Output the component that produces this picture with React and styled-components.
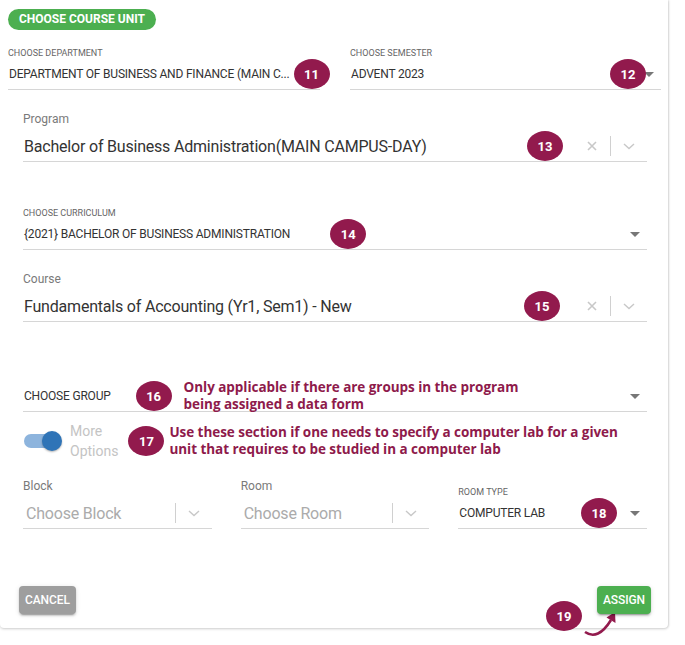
import React from 'react';
import styled, { createGlobalStyle } from 'styled-components';

const GlobalStyle = createGlobalStyle`
  body {
    margin: 0;
    background: #fff;
    font-family: Roboto, 'Liberation Sans', sans-serif;
  }
`;

const Page = styled.div`
  padding-bottom: 18px;
`;

const Card = styled.div`
  width: 668px;
  box-sizing: border-box;
  background: #fff;
  border-radius: 0 0 4px 4px;
  box-shadow: 0 1px 3px rgba(0, 0, 0, 0.18), 1px 0 2px rgba(0, 0, 0, 0.1);
`;

const Header = styled.div`
  padding: 8px 7px 0 8px;
`;

const Pill = styled.div`
  display: inline-block;
  height: 21px;
  line-height: 21px;
  padding: 0 11px;
  border-radius: 11px;
  background: #4caf50;
  color: #fff;
  font-size: 12px;
  font-weight: 700;
`;

const TopGrid = styled.div`
  display: grid;
  grid-template-columns: 312px 311px;
  column-gap: 30px;
  margin-top: 17px;
`;

const SmallLabel = styled.div`
  font-size: 9px;
  line-height: 12px;
  color: #666;
  text-transform: uppercase;
`;

const Row = styled.div`
  display: flex;
  align-items: center;
  height: 30px;
  border-bottom: 1px solid #d6d6d6;
  color: ${(p) => (p.$muted ? '#ababab' : '#333')};
  font-size: ${(p) => (p.$big ? '16px' : '12px')};
  letter-spacing: -0.2px;
  white-space: nowrap;
`;

const Value = styled.span`
  padding-left: ${(p) => p.$pad || 1}px;
`;

const Spacer = styled.div`
  flex: 1;
`;

const Badge = styled.span`
  display: inline-flex;
  align-items: center;
  justify-content: center;
  flex-shrink: 0;
  width: 36px;
  height: 30px;
  margin-left: ${(p) => p.$ml || 0}px;
  margin-right: ${(p) => p.$mr || 0}px;
  border-radius: 50%;
  background: #921a4d;
  color: #fff;
  font-size: 13px;
  font-weight: 700;
  letter-spacing: 0;
  position: relative;
  z-index: 1;
`;

const Form = styled.div`
  padding: 0 21px 0 23px;
`;

const Field = styled.div`
  margin-top: ${(p) => p.$mt || 0}px;
`;

const BigLabel = styled.div`
  font-size: 12px;
  line-height: 14px;
  color: #7a7a7a;
  margin-bottom: 5px;
`;

const Note = styled.div`
  margin-left: ${(p) => p.$ml || 0}px;
  font-family: 'Open Sans', Roboto, sans-serif;
  font-size: 13.5px;
  line-height: 17px;
  font-weight: 700;
  letter-spacing: -0.05px;
  color: #8e1a4b;
  white-space: nowrap;
`;

const IndicatorBox = styled.span`
  display: flex;
  align-items: center;
  justify-content: center;
  width: 36px;
  height: 30px;
  flex-shrink: 0;
`;

const Separator = styled.span`
  width: 1px;
  height: 20px;
  background: #d0d0d0;
  flex-shrink: 0;
`;

const ArrowBox = styled.span`
  display: flex;
  align-items: center;
  justify-content: center;
  width: 24px;
  height: 24px;
  flex-shrink: 0;
  margin-left: ${(p) => p.$ml || 0}px;
`;

const ToggleRow = styled.div`
  display: flex;
  align-items: center;
  height: 40px;
  margin-top: 9px;
`;

const Switch = styled.span`
  position: relative;
  width: 38px;
  height: 20px;
  margin-left: 1px;
  flex-shrink: 0;
`;

const Track = styled.span`
  position: absolute;
  left: 0;
  top: 3px;
  width: 33px;
  height: 14px;
  border-radius: 7px;
  background: #8db4dd;
`;

const Thumb = styled.span`
  position: absolute;
  right: 0;
  top: 0;
  width: 20px;
  height: 20px;
  border-radius: 50%;
  background: #2f74b7;
  box-shadow: 0 1px 2px rgba(0, 0, 0, 0.3);
`;

const MoreText = styled.div`
  margin-left: 8px;
  font-size: 14px;
  line-height: 20px;
  color: #c4c4c4;
`;

const TripleGrid = styled.div`
  display: grid;
  grid-template-columns: 1fr 1fr 1fr;
  column-gap: 29px;
  align-items: end;
  margin-top: 18px;
`;

const Footer = styled.div`
  display: flex;
  justify-content: space-between;
  align-items: center;
  margin-top: 57px;
  padding: 0 17px 14px 19px;
`;

const Button = styled.button`
  position: relative;
  z-index: 2;
  height: 28px;
  padding: 0 6px;
  border: none;
  border-radius: 4px;
  background: ${(p) => (p.$primary ? '#4caf50' : '#9e9e9e')};
  color: #fff;
  font-family: Roboto, 'Liberation Sans', sans-serif;
  font-size: 12px;
  font-weight: 500;
  letter-spacing: -0.1px;
  box-shadow: 0 3px 1px -2px rgba(0, 0, 0, 0.2), 0 2px 2px 0 rgba(0, 0, 0, 0.14),
    0 1px 5px 0 rgba(0, 0, 0, 0.12);
`;

const AssignWrap = styled.div`
  position: relative;
`;

const Pointer = styled.div`
  position: absolute;
  left: -51px;
  top: 15px;
`;

const CurlArrow = styled.svg`
  position: absolute;
  left: 36px;
  top: 10px;
`;

const DropArrow = () => (
  <svg width="24" height="24" viewBox="0 0 24 24">
    <path d="M7 10l5 5 5-5z" fill="#777" />
  </svg>
);

const Cross = () => (
  <svg width="12" height="12" viewBox="0 0 12 12">
    <path d="M2 2L10 10M10 2L2 10" stroke="#c8c8c8" strokeWidth="1.6" />
  </svg>
);

const Chevron = () => (
  <svg width="14" height="10" viewBox="0 0 14 10">
    <path d="M2 3L7 7.5L12 3" stroke="#c8c8c8" strokeWidth="1.4" fill="none" />
  </svg>
);

const SelectIndicators = ({ clearable }) => (
  <>
    {clearable && (
      <IndicatorBox>
        <Cross />
      </IndicatorBox>
    )}
    <Separator />
    <IndicatorBox>
      <Chevron />
    </IndicatorBox>
  </>
);

const App = () => (
  <Page>
    <GlobalStyle />
    <Card>
      <Header>
        <Pill>CHOOSE COURSE UNIT</Pill>
        <TopGrid>
          <div>
            <SmallLabel>Choose Department</SmallLabel>
            <Row>
              <Value>DEPARTMENT OF BUSINESS AND FINANCE (MAIN C...</Value>
              <Badge $ml={4}>11</Badge>
            </Row>
          </div>
          <div>
            <SmallLabel>Choose Semester</SmallLabel>
            <Row>
              <Value>ADVENT 2023</Value>
              <Spacer />
              <Badge>12</Badge>
              <ArrowBox $ml={-9}>
                <DropArrow />
              </ArrowBox>
            </Row>
          </div>
        </TopGrid>
      </Header>

      <Form>
        <Field $mt={22}>
          <BigLabel>Program</BigLabel>
          <Row $big>
            <Value>Bachelor of Business Administration(MAIN CAMPUS-DAY)</Value>
            <Spacer />
            <Badge $mr={11}>13</Badge>
            <SelectIndicators clearable />
          </Row>
        </Field>

        <Field $mt={45}>
          <SmallLabel>Choose Curriculum</SmallLabel>
          <Row>
            <Value>{'{2021} BACHELOR OF BUSINESS ADMINISTRATION'}</Value>
            <Badge $ml={40}>14</Badge>
            <Spacer />
            <DropArrow />
          </Row>
        </Field>

        <Field $mt={22}>
          <BigLabel>Course</BigLabel>
          <Row $big>
            <Value>Fundamentals of Accounting (Yr1, Sem1) - New</Value>
            <Spacer />
            <Badge $mr={14}>15</Badge>
            <SelectIndicators clearable />
          </Row>
        </Field>

        <Field $mt={59}>
          <Row>
            <Value>CHOOSE GROUP</Value>
            <Badge $ml={25}>16</Badge>
            <Note $ml={12}>
              Only applicable if there are groups in the program
              <br />
              being assigned a data form
            </Note>
            <Spacer />
            <DropArrow />
          </Row>
        </Field>

        <ToggleRow>
          <Switch>
            <Track />
            <Thumb />
          </Switch>
          <MoreText>
            More
            <br />
            Options
          </MoreText>
          <Badge $ml={10}>17</Badge>
          <Note $ml={5}>
            Use these section if one needs to specify a computer lab for a given
            <br />
            unit that requires to be studied in a computer lab
          </Note>
        </ToggleRow>

        <TripleGrid>
          <div>
            <BigLabel>Block</BigLabel>
            <Row $big $muted>
              <Value $pad={3}>Choose Block</Value>
              <Spacer />
              <SelectIndicators />
            </Row>
          </div>
          <div>
            <BigLabel>Room</BigLabel>
            <Row $big $muted>
              <Value $pad={3}>Choose Room</Value>
              <Spacer />
              <SelectIndicators />
            </Row>
          </div>
          <div>
            <SmallLabel>Room Type</SmallLabel>
            <Row>
              <Value>COMPUTER LAB</Value>
              <Spacer />
              <Badge $mr={6}>18</Badge>
              <DropArrow />
            </Row>
          </div>
        </TripleGrid>
      </Form>

      <Footer>
        <Button>CANCEL</Button>
        <AssignWrap>
          <Pointer>
            <Badge>19</Badge>
            <CurlArrow width="40" height="28" viewBox="0 0 40 28">
              <path d="M3 21 Q 16 30 29 9" stroke="#921a4d" strokeWidth="2.6" fill="none" />
              <path d="M33 1 L24.5 6.5 L33.5 12 Z" fill="#921a4d" />
            </CurlArrow>
          </Pointer>
          <Button $primary>ASSIGN</Button>
        </AssignWrap>
      </Footer>
    </Card>
  </Page>
);

export default App;
